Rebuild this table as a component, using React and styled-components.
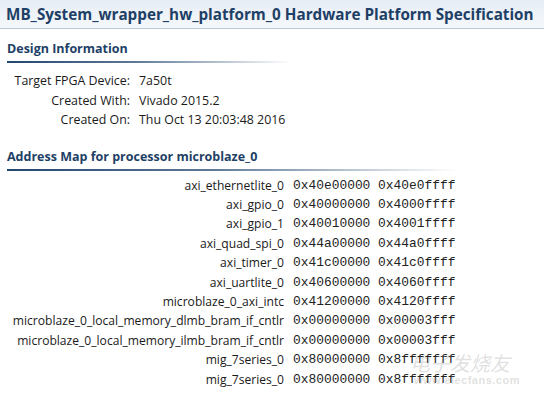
import styled, { createGlobalStyle } from "styled-components";

const GlobalStyle = createGlobalStyle`
  html, body {
    margin: 0;
    padding: 0;
    background: #ffffff;
  }
  body {
    font-family: "Open Sans", "Liberation Sans", sans-serif;
    color: #1a1a1a;
  }
`;

const Page = styled.div`
  position: relative;
  width: 544px;
  height: 398px;
  overflow: hidden;
  background: #ffffff;
`;

const TitleBar = styled.div`
  height: 28px;
  padding-left: 6px;
  display: flex;
  align-items: center;
  background: linear-gradient(to bottom, #e6edf5, #f5f8fb);
  border-bottom: 1px solid #b9c7d6;
`;

const Title = styled.h1`
  margin: 0;
  font-size: 15.25px;
  font-weight: 700;
  color: #1e3f66;
  white-space: nowrap;
`;

const Section = styled.section`
  padding: 0 0 0 7px;
`;

const Heading = styled.h2`
  margin: 0;
  padding: 11px 0 4px;
  font-size: 12.5px;
  font-weight: 700;
  color: #1e3f66;
  width: ${(p) => p.$line}px;
  border-bottom: 2px solid transparent;
  border-image: linear-gradient(to right, #23466d 0%, #5c7896 45%, #ffffff 100%) 1;
`;

const InfoGrid = styled.div`
  display: grid;
  grid-template-columns: 118px auto;
  column-gap: 9px;
  padding: 8px 0 7px 5px;
  font-size: 12.4px;
  line-height: 19.5px;
`;

const Label = styled.div`
  text-align: right;
  white-space: nowrap;
`;

const Value = styled.div`
  white-space: nowrap;
`;

const AddressGrid = styled.div`
  display: grid;
  grid-template-columns: 272px auto;
  column-gap: 9px;
  padding: 5px 0 0 5px;
  font-size: 12.1px;
  line-height: 19.4px;
`;

const Address = styled.div`
  font-family: "Liberation Mono", "DejaVu Sans Mono", monospace;
  font-size: 12.9px;
  white-space: pre;
  color: #222;
`;

const Watermark = styled.div`
  position: absolute;
  right: 24px;
  bottom: 12px;
  display: flex;
  flex-direction: column;
  align-items: flex-end;
  color: rgba(150, 150, 150, 0.3);
  pointer-events: none;
`;

const WmCn = styled.span`
  font-family: "Noto Sans CJK SC", sans-serif;
  font-size: 20px;
  font-style: italic;
  line-height: 22px;
  margin-right: 10px;
`;

const WmUrl = styled.span`
  font-family: "Liberation Sans", sans-serif;
  font-size: 11px;
  font-weight: 700;
  letter-spacing: 0.5px;
`;

const info = [
  ["Target FPGA Device:", "7a50t"],
  ["Created With:", "Vivado 2015.2"],
  ["Created On:", "Thu Oct 13 20:03:48 2016"],
];

const map = [
  ["axi_ethernetlite_0", "0x40e00000", "0x40e0ffff"],
  ["axi_gpio_0", "0x40000000", "0x4000ffff"],
  ["axi_gpio_1", "0x40010000", "0x4001ffff"],
  ["axi_quad_spi_0", "0x44a00000", "0x44a0ffff"],
  ["axi_timer_0", "0x41c00000", "0x41c0ffff"],
  ["axi_uartlite_0", "0x40600000", "0x4060ffff"],
  ["microblaze_0_axi_intc", "0x41200000", "0x4120ffff"],
  ["microblaze_0_local_memory_dlmb_bram_if_cntlr", "0x00000000", "0x00003fff"],
  ["microblaze_0_local_memory_ilmb_bram_if_cntlr", "0x00000000", "0x00003fff"],
  ["mig_7series_0", "0x80000000", "0x8fffffff"],
  ["mig_7series_0", "0x80000000", "0x8fffffff"],
];

export default function App() {
  return (
    <Page>
      <GlobalStyle />
      <TitleBar>
        <Title>MB_System_wrapper_hw_platform_0 Hardware Platform Specification</Title>
      </TitleBar>

      <Section>
        <Heading $line={283}>Design Information</Heading>
        <InfoGrid>
          {info.map(([k, v]) => (
            <>
              <Label key={k}>{k}</Label>
              <Value>{v}</Value>
            </>
          ))}
        </InfoGrid>
      </Section>

      <Section>
        <Heading $line={450}>Address Map for processor microblaze_0</Heading>
        <AddressGrid>
          {map.map(([name, lo, hi], i) => (
            <>
              <Label key={i}>{name}</Label>
              <Address>{lo} {hi}</Address>
            </>
          ))}
        </AddressGrid>
      </Section>

      <Watermark>
        <WmCn>电子发烧友</WmCn>
        <WmUrl>www.elecfans.com</WmUrl>
      </Watermark>
    </Page>
  );
}
